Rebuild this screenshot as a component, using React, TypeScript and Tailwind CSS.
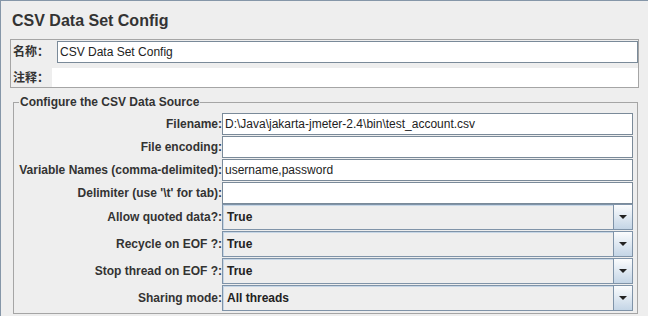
const textRows = [
  { label: "Filename:", value: "D:\\Java\\jakarta-jmeter-2.4\\bin\\test_account.csv" },
  { label: "File encoding:", value: "" },
  { label: "Variable Names (comma-delimited):", value: "username,password" },
  { label: "Delimiter (use '\\t' for tab):", value: "" },
];

const comboRows = [
  { label: "Allow quoted data?:", value: "True" },
  { label: "Recycle on EOF ?:", value: "True" },
  { label: "Stop thread on EOF ?:", value: "True" },
  { label: "Sharing mode:", value: "All threads" },
];

const Combo = ({ value }: { value: string }) => {
  return (
    <div className="flex-1 flex h-[26px] border border-[#7f93a8] bg-[#eeeeee]">
      <div className="flex-1 flex items-center pl-[4px] font-bold text-[#222] shadow-[inset_1px_1px_0_#c6d6e6]">
        {value}
      </div>
      <div className="w-[19px] flex items-center justify-center border-l border-[#7f93a8] bg-gradient-to-b from-[#fbfcfd] to-[#c4d5e6]">
        <svg width="8" height="4" viewBox="0 0 8 4">
          <polygon points="0,0 8,0 4,4" fill="#222" />
        </svg>
      </div>
    </div>
  );
};

const App = () => {
  return (
    <div className="w-[648px] h-[316px] overflow-hidden bg-[#eeeeee] border-l border-t border-[#8596a8] text-[12px] text-[#333] font-['Liberation_Sans','Noto_Sans_CJK_SC',sans-serif]">
      <h1 className="pt-[12px] pl-[11px] text-[16px] leading-[16px] font-bold text-[#333]">
        CSV Data Set Config
      </h1>

      <section className="mt-[10px] ml-[9px] w-[629px] border border-[#a5a5a5]">
        <div className="flex pt-[1px] h-[23px]">
          <label className="w-[46px] pl-[2px] flex items-center font-bold">名称：</label>
          <div className="flex-1 flex items-center pl-[2px] bg-white border border-[#7a8a99] text-[#222]">
            CSV Data Set Config
          </div>
        </div>
        <div className="h-[5px]" />
        <div className="flex h-[19px]">
          <label className="w-[41px] pl-[2px] flex items-center font-bold">注释：</label>
          <div className="flex-1 bg-white" />
        </div>
      </section>

      <fieldset className="mt-[7px] ml-[12px] w-[625px] border border-[#a5a5a5]">
        <legend className="ml-[5px] px-[1px] font-bold leading-[14px]">
          Configure the CSV Data Source
        </legend>
        <div className="flex flex-col pt-[4px] pb-[2px] pr-[4px]">
          <div className="flex flex-col gap-[1px]">
            {textRows.map((row, index) => {
              return (
                <div key={index} className="flex h-[22px]">
                  <label className="w-[208px] flex items-center justify-end font-bold">
                    {row.label}
                  </label>
                  <div className="flex-1 flex items-center pl-[2px] bg-white border border-[#7a8a99] text-[#222]">
                    {row.value}
                  </div>
                </div>
              );
            })}
          </div>
          <div className="flex flex-col gap-[1px]">
            {comboRows.map((row, index) => {
              return (
                <div key={index} className="flex h-[26px]">
                  <label className="w-[208px] flex items-center justify-end font-bold">
                    {row.label}
                  </label>
                  <Combo value={row.value} />
                </div>
              );
            })}
          </div>
        </div>
      </fieldset>
    </div>
  );
};

export default App;
